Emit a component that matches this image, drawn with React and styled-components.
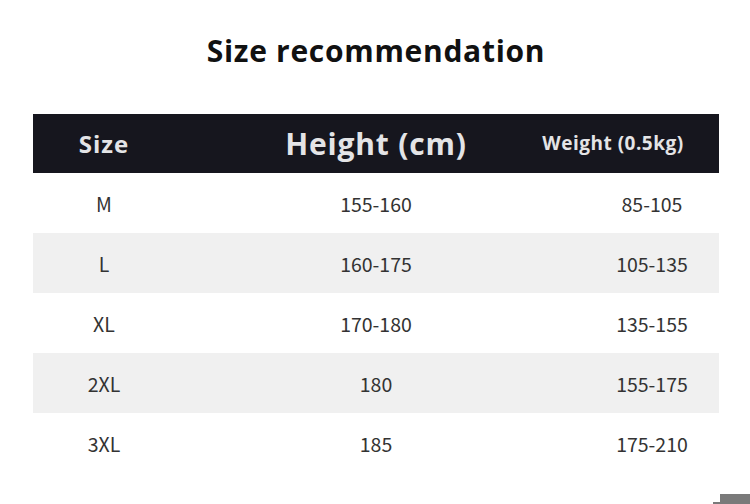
import React from "react";
import styled, { createGlobalStyle } from "styled-components";

const Global = createGlobalStyle`
  html, body { margin: 0; padding: 0; background: #ffffff; }
  body { width: 750px; height: 504px; overflow: hidden; }
`;

const Page = styled.div`
  position: relative;
  width: 750px;
  height: 504px;
  background: #fff;
  padding: 0 31px 0 33px;
  box-sizing: border-box;
  font-family: "Noto Sans CJK SC", "Noto Sans", sans-serif;
`;

const Title = styled.h1`
  margin: 0;
  height: 114px;
  padding-top: 31px;
  box-sizing: border-box;
  text-align: center;
  font-family: "Open Sans", "Noto Sans", sans-serif;
  font-weight: 700;
  font-size: 30px;
  line-height: 40px;
  color: #111;
  letter-spacing: 0.7px;
`;

const Row = styled.div`
  display: grid;
  grid-template-columns: 142px 402px 142px;
  height: ${(p) => (p.$head ? 59 : 60)}px;
  background: ${(p) => (p.$head ? "#16161e" : p.$alt ? "#f0f0f0" : "#fff")};
  align-items: center;
`;

const HeadCell = styled.div`
  display: flex;
  justify-content: center;
  white-space: nowrap;
  min-width: 0;
  font-family: "Open Sans", "Noto Sans", sans-serif;
  font-weight: 700;
  color: #e4e4e6;
  font-size: ${(p) => p.$size}px;
  letter-spacing: ${(p) => p.$ls || 0}px;
  padding-right: ${(p) => p.$shift || 0}px;
  padding-bottom: 1px;
`;

const Cell = styled.div`
  text-align: center;
  font-size: 19.5px;
  color: #333;
  padding-left: ${(p) => p.$shift || 0}px;
`;

const Corner = styled.div`
  position: absolute;
  right: 0;
  bottom: 0;
  width: 30px;
  height: 10px;
  background: #7a7a7a;
  &::before {
    content: "";
    position: absolute;
    left: -7px;
    bottom: 0;
    width: 7px;
    height: 2px;
    background: #7a7a7a;
  }
`;

const rows = [
  ["M", "155-160", "85-105"],
  ["L", "160-175", "105-135"],
  ["XL", "170-180", "135-155"],
  ["2XL", "180", "155-175"],
  ["3XL", "185", "175-210"],
];

export default function App() {
  return (
    <>
      <Global />
      <Page>
        <Title>Size recommendation</Title>
        <Row $head>
          <HeadCell $size={24} $ls={1}>Size</HeadCell>
          <HeadCell $size={30} $ls={0.8}>Height (cm)</HeadCell>
          <HeadCell $size={19} $ls={0.5} $shift={70}>Weight (0.5kg)</HeadCell>
        </Row>
        {rows.map((r, i) => (
          <Row key={r[0]} $alt={i % 2 === 1}>
            <Cell>{r[0]}</Cell>
            <Cell>{r[1]}</Cell>
            <Cell $shift={8}>{r[2]}</Cell>
          </Row>
        ))}
        <Corner />
      </Page>
    </>
  );
}
